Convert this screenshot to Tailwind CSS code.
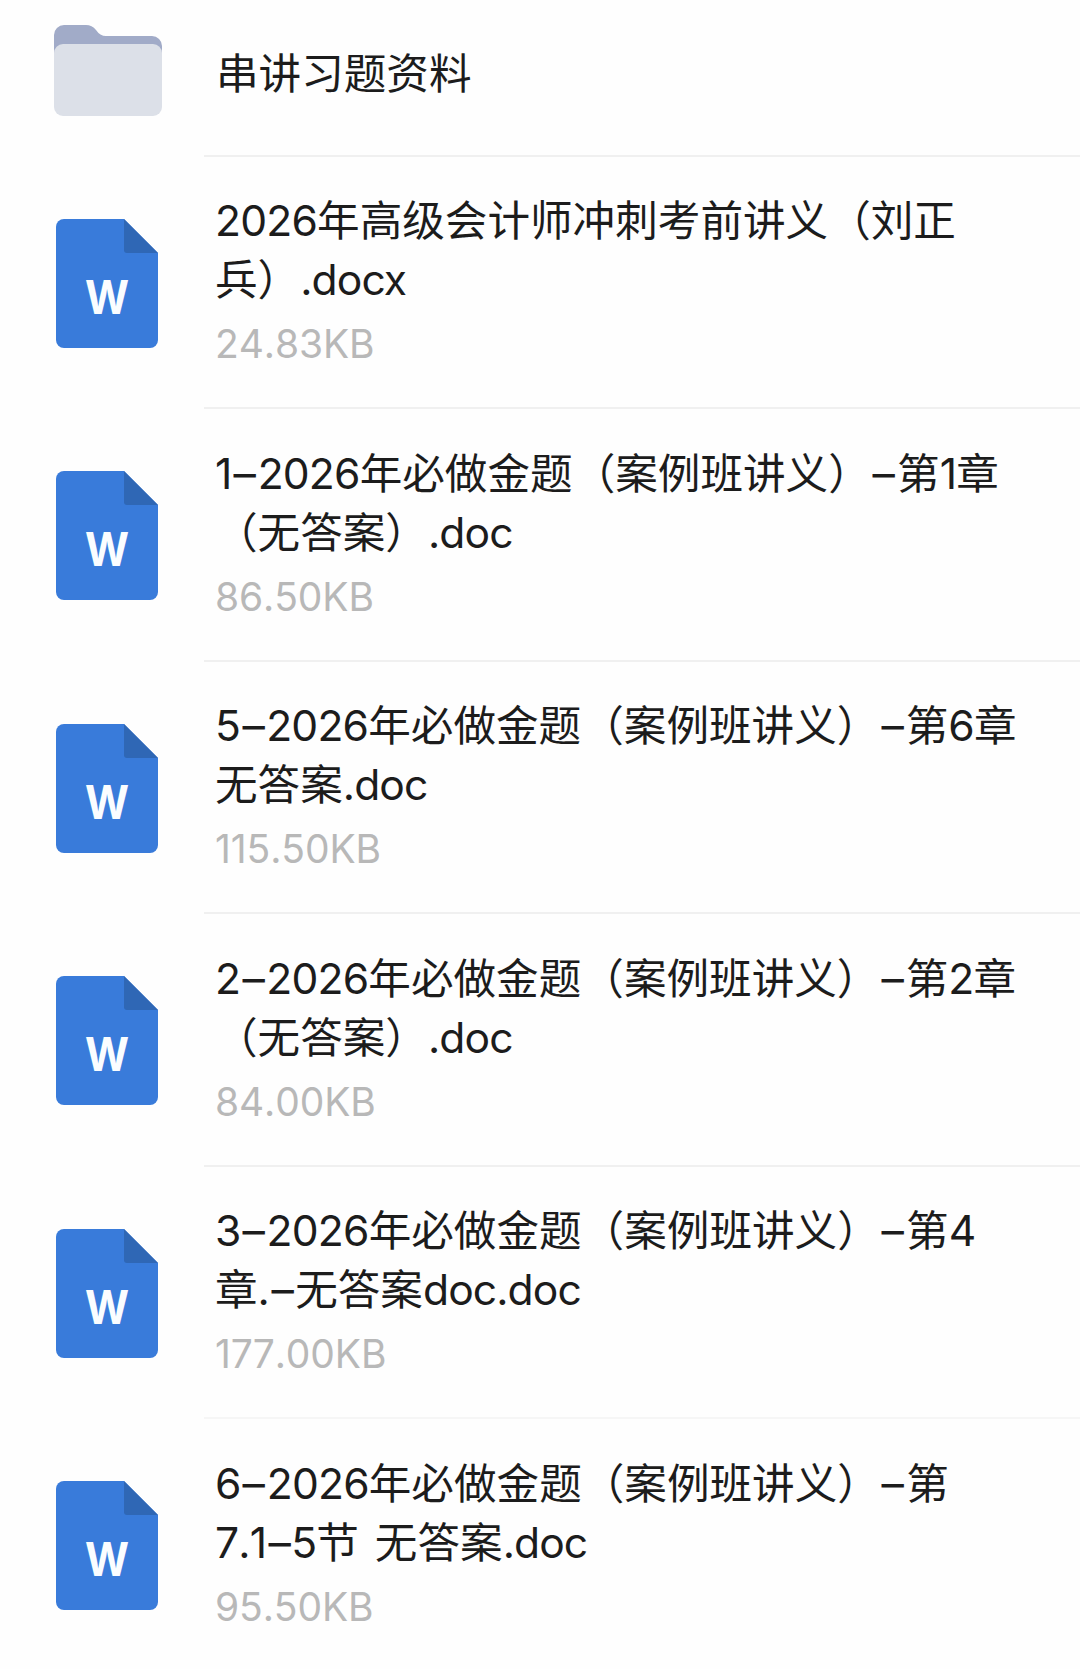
<!DOCTYPE html>
<html lang="zh-CN">
<head>
    <meta charset="UTF-8">
    <meta name="viewport" content="width=device-width, initial-scale=1.0">
    <script src="https://cdn.jsdelivr.net/npm/@tailwindcss/browser@4"></script>
    <title>串讲习题资料</title>
</head>
<body class="bg-[#fefefe] overflow-hidden">
    <!-- 文档图标 -->
    <svg class="hidden">
        <symbol id="word" viewBox="0 0 102 129">
            <path d="M8 0H68L102 34V121a8 8 0 0 1-8 8H8a8 8 0 0 1-8-8V8a8 8 0 0 1 8-8Z" fill="#397bda"/>
            <path d="M68 0L102 34H71a3 3 0 0 1-3-3Z" fill="#2f67b5"/>
            <text x="51" y="95" text-anchor="middle" textLength="44" lengthAdjust="spacingAndGlyphs" font-family="Inter, sans-serif" font-size="47" font-weight="700" fill="#fafdff">W</text>
        </symbol>
    </svg>

    <!-- 文件列表 -->
    <ul class="w-[1080px] font-['Inter','Noto_Sans_CJK_SC',sans-serif] text-[42.6px] leading-[59px] text-[#1c1c1c] whitespace-nowrap [text-spacing-trim:space-all]">
        <li class="flex h-[156.5px]">
            <div class="w-[204px] shrink-0 pl-[53.5px] pt-[25px]">
                <svg class="w-[108px] h-[91px]" viewBox="0 0 108 91">
                    <path d="M0 30V10A10 10 0 0 1 10 0H32Q38 0 42 5Q46 11 52 11H98a10 10 0 0 1 10 10V30Z" fill="#a1abc8"/>
                    <rect y="19" width="108" height="72" rx="9" fill="#dce0e8"/>
                </svg>
            </div>
            <div class="flex-1 border-b-2 border-[#f0f0f0] pl-3 pt-11">
                <p>串讲习题资料</p>
            </div>
        </li>
        <li class="flex h-[252.6px]">
            <div class="w-[204px] shrink-0 pl-14 pt-[62px]"><svg class="w-[102px] h-[129px]"><use href="#word"/></svg></div>
            <div class="flex-1 border-b-2 border-[#f0f0f0] pl-[11px] pt-[34.5px]">
                <p><span class="tracking-[-0.8px]">2026</span>年高级会计师冲刺考前讲义（刘正<br>兵）<span class="tracking-[-0.9px]">.docx</span></p>
                <p class="pt-[5px] text-[39px] tracking-[-0.1px] [font-kerning:none] text-[#b8b8b8]">24.83KB</p>
            </div>
        </li>
        <li class="flex h-[252.6px]">
            <div class="w-[204px] shrink-0 pl-14 pt-[62px]"><svg class="w-[102px] h-[129px]"><use href="#word"/></svg></div>
            <div class="flex-1 border-b-2 border-[#f0f0f0] pl-[11px] pt-[34.5px]">
                <p><span class="tracking-[-0.8px]">1<span class="inline-block scale-x-105 mx-[2.8px]">–</span>2026</span>年必做金题（案例班讲义）<span class="inline-block scale-x-105 mx-[2.5px]">–</span>第<span class="tracking-[-0.8px]">1</span>章<br>（无答案）<span class="tracking-[-0.9px]">.doc</span></p>
                <p class="pt-[5px] text-[39px] tracking-[-0.1px] [font-kerning:none] text-[#b8b8b8]">86.50KB</p>
            </div>
        </li>
        <li class="flex h-[252.6px]">
            <div class="w-[204px] shrink-0 pl-14 pt-[62px]"><svg class="w-[102px] h-[129px]"><use href="#word"/></svg></div>
            <div class="flex-1 border-b-2 border-[#f0f0f0] pl-[11px] pt-[34.5px]">
                <p><span class="tracking-[-0.8px]">5<span class="inline-block scale-x-105 mx-[2.8px]">–</span>2026</span>年必做金题（案例班讲义）<span class="inline-block scale-x-105 mx-[2.5px]">–</span>第<span class="tracking-[-0.8px]">6</span>章<br>无答案<span class="tracking-[-0.9px]">.doc</span></p>
                <p class="pt-[5px] text-[39px] tracking-[-0.1px] [font-kerning:none] text-[#b8b8b8]">115.50KB</p>
            </div>
        </li>
        <li class="flex h-[252.6px]">
            <div class="w-[204px] shrink-0 pl-14 pt-[62px]"><svg class="w-[102px] h-[129px]"><use href="#word"/></svg></div>
            <div class="flex-1 border-b-2 border-[#f0f0f0] pl-[11px] pt-[34.5px]">
                <p><span class="tracking-[-0.8px]">2<span class="inline-block scale-x-105 mx-[2.8px]">–</span>2026</span>年必做金题（案例班讲义）<span class="inline-block scale-x-105 mx-[2.5px]">–</span>第<span class="tracking-[-0.8px]">2</span>章<br>（无答案）<span class="tracking-[-0.9px]">.doc</span></p>
                <p class="pt-[5px] text-[39px] tracking-[-0.1px] [font-kerning:none] text-[#b8b8b8]">84.00KB</p>
            </div>
        </li>
        <li class="flex h-[252.6px]">
            <div class="w-[204px] shrink-0 pl-14 pt-[62px]"><svg class="w-[102px] h-[129px]"><use href="#word"/></svg></div>
            <div class="flex-1 border-b-2 border-[#f6f6f6] pl-[11px] pt-[34.5px]">
                <p><span class="tracking-[-0.8px]">3<span class="inline-block scale-x-105 mx-[2.8px]">–</span>2026</span>年必做金题（案例班讲义）<span class="inline-block scale-x-105 mx-[2.5px]">–</span>第<span class="tracking-[-0.8px]">4</span><br>章.<span class="inline-block scale-x-105 mx-[2px]">–</span>无答案<span class="tracking-[-0.9px]">doc.doc</span></p>
                <p class="pt-[5px] text-[39px] tracking-[-0.1px] [font-kerning:none] text-[#b8b8b8]">177.00KB</p>
            </div>
        </li>
        <li class="flex h-[250px]">
            <div class="w-[204px] shrink-0 pl-14 pt-[62px]"><svg class="w-[102px] h-[129px]"><use href="#word"/></svg></div>
            <div class="flex-1 pl-[11px] pt-[34.5px]">
                <p><span class="tracking-[-0.8px]">6<span class="inline-block scale-x-105 mx-[2.8px]">–</span>2026</span>年必做金题（案例班讲义）<span class="inline-block scale-x-105 mx-[2.5px]">–</span>第<br><span class="tracking-[-0.8px] [font-kerning:none]">7.1<span class="inline-block scale-x-105 mx-[2.2px]">–</span>5</span>节<span class="[word-spacing:4px]"> </span>无答案<span class="tracking-[-0.9px]">.doc</span></p>
                <p class="pt-[5px] text-[39px] tracking-[-0.1px] [font-kerning:none] text-[#b8b8b8]">95.50KB</p>
            </div>
        </li>
    </ul>
</body>
</html>
